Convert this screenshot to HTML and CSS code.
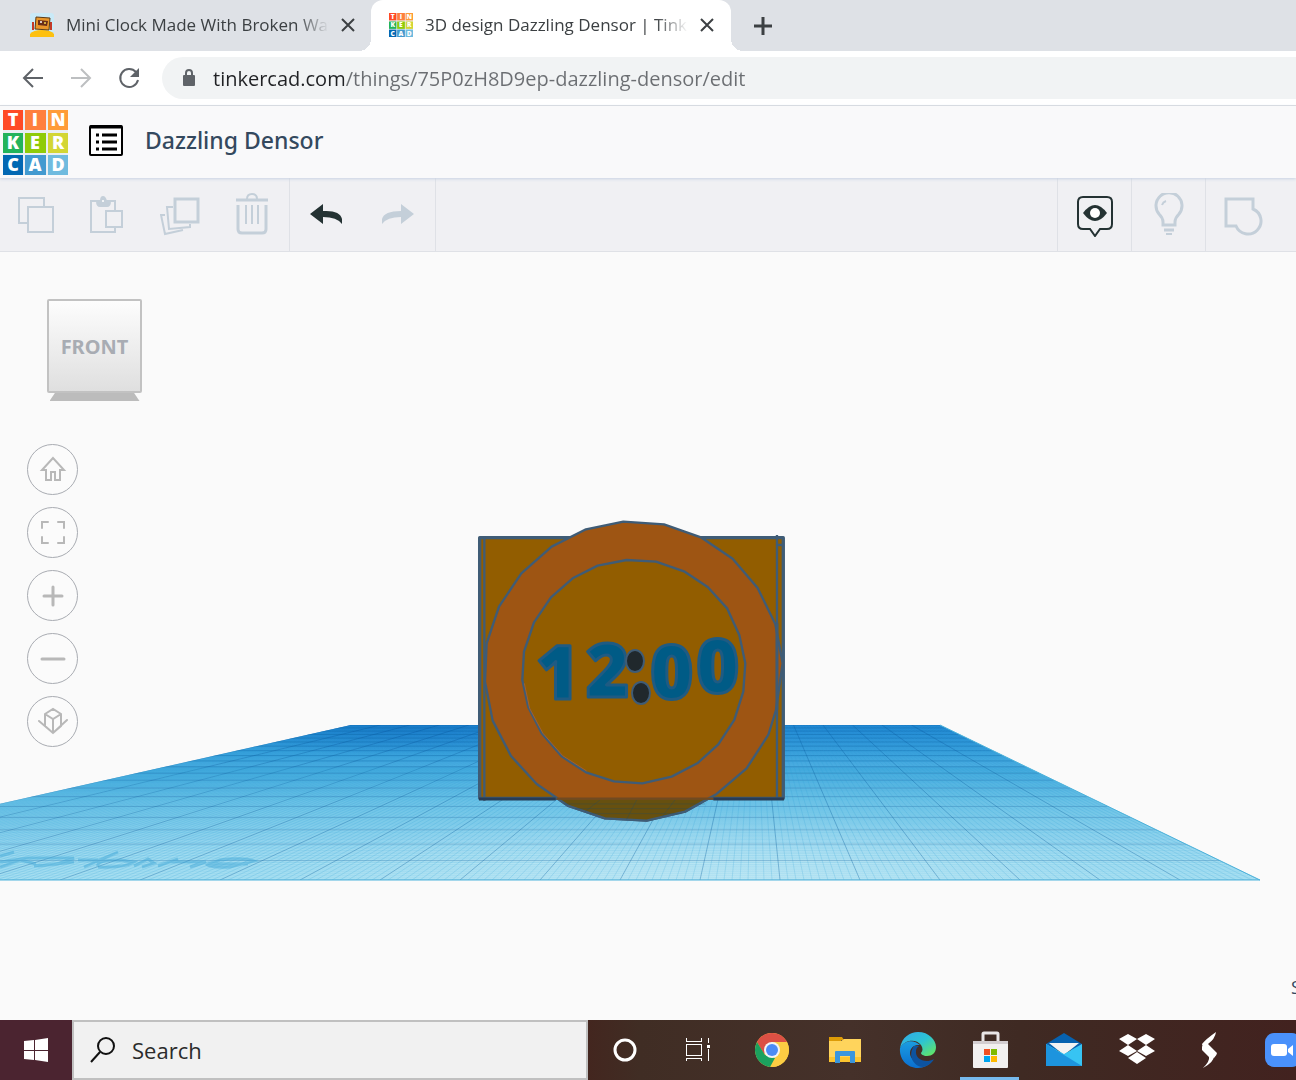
FILE: index.html
```html
<!DOCTYPE html>
<html lang="en">
<head>
    <meta charset="UTF-8">
    <meta name="viewport" content="width=device-width, initial-scale=1.0">
    <title>3D design Dazzling Densor | Tinkercad</title>
    <link rel="stylesheet" href="styles.css">
</head>
<body>

    <svg class="symbols" aria-hidden="true">
        <symbol id="logo" viewBox="0 0 65 65">
            <rect width="65" height="65" fill="#e9eef3"/>
            <g>
                <rect x="0" y="0" width="20" height="20" fill="#ff4a26"/>
                <rect x="22" y="0" width="21" height="20" fill="#ff7f3e"/>
                <rect x="45" y="0" width="20" height="20" fill="#ff9c38"/>
                <rect x="0" y="23" width="20" height="20" fill="#23b35b"/>
                <rect x="22" y="23" width="21" height="20" fill="#8fcb08"/>
                <rect x="45" y="23" width="20" height="20" fill="#d3d634"/>
                <rect x="0" y="45" width="20" height="20" fill="#0268b3"/>
                <rect x="22" y="45" width="21" height="20" fill="#429ad0"/>
                <rect x="45" y="45" width="20" height="20" fill="#6fbbdf"/>
            </g>
            <g fill="#fff" font-family="Open Sans, sans-serif" font-weight="800" font-size="18" text-anchor="middle">
                <text x="10" y="16">T</text><text x="32" y="16">I</text><text x="55" y="16">N</text>
                <text x="10" y="39">K</text><text x="32" y="39">E</text><text x="55" y="39">R</text>
                <text x="10" y="61">C</text><text x="32" y="61">A</text><text x="55" y="61">D</text>
            </g>
        </symbol>
    </svg>

    <!-- Browser -->
    <div class="tab-strip">
        <div class="tab">
            <svg class="favicon" viewBox="0 0 24 24">
                <rect width="24" height="24" rx="3" fill="#c9eaf8"/>
                <path d="M0 24v-3q3-4 12-4t12 4v3z" fill="#fdc010"/>
                <path d="M3 9v8M21 9v8" stroke="#c33a28" stroke-width="2"/>
                <path d="M6 4l14 1-1 12-14-1z" fill="#e9962a" stroke="#593b18"/>
                <path d="M8 7l10 1-1 5-9-1z" fill="#6a2e1a"/>
                <circle cx="11" cy="9" r="1" fill="#fff"/><circle cx="15" cy="10" r="1" fill="#f8d64a"/>
            </svg>
            <span class="tab-title">Mini Clock Made With Broken Watch</span>
            <button class="tab-close" aria-label="Close tab"><svg width="14" height="14" viewBox="0 0 14 14"><path d="M1 1l12 12M13 1L1 13"/></svg></button>
        </div>
        <div class="tab active">
            <svg class="favicon"><use href="#logo"/></svg>
            <span class="tab-title">3D design Dazzling Densor | Tinkercad</span>
            <button class="tab-close" aria-label="Close tab"><svg width="14" height="14" viewBox="0 0 14 14"><path d="M1 1l12 12M13 1L1 13"/></svg></button>
        </div>
        <button class="new-tab" aria-label="New tab"><svg width="18" height="18" viewBox="0 0 18 18"><path d="M9 0v18M0 9h18"/></svg></button>
    </div>

    <div class="browser-bar">
        <button class="nav-button" aria-label="Back"><svg width="24" height="24" viewBox="0 0 24 24"><path d="M22 12H3M12 3l-9 9 9 9" fill="none" stroke="#5f6368" stroke-width="2"/></svg></button>
        <button class="nav-button" aria-label="Forward"><svg width="24" height="24" viewBox="0 0 24 24"><path d="M2 12h19M12 3l9 9-9 9" fill="none" stroke="#bdbfc1" stroke-width="2"/></svg></button>
        <button class="nav-button" aria-label="Reload"><svg width="24" height="24" viewBox="0 0 24 24"><path d="M19 6a9 9 0 1 0 2 8" fill="none" stroke="#5f6368" stroke-width="2"/><path d="M22 2v9h-9z" fill="#5f6368"/></svg></button>
        <div class="omnibox">
            <svg width="14" height="18" viewBox="0 0 14 18"><rect x="1" y="6" width="12" height="11" rx="1" fill="#5f6368"/><path d="M4 7V4a3 3 0 0 1 6 0v3" fill="none" stroke="#5f6368" stroke-width="2"/></svg>
            <input class="url" type="text" aria-label="Address" spellcheck="false" value="tinkercad.com/things/75P0zH8D9ep-dazzling-densor/edit">
        </div>
    </div>

    <!-- Tinkercad -->
    <header class="header">
        <a class="logo" href="#" aria-label="Tinkercad"><svg width="65" height="65"><use href="#logo"/></svg></a>
        <button class="menu-button" aria-label="Designs">
            <svg width="34" height="31" viewBox="0 0 34 31"><rect x="1" y="1" width="32" height="29" rx="1" fill="#fff" stroke="#000" stroke-width="2"/><path d="M1 2h32" stroke="#000" stroke-width="3"/><path d="M7 10h3M7 17h3M7 24h3M13 10h15M13 17h15M13 24h15" stroke="#000" stroke-width="3"/></svg>
        </button>
        <h1 class="design-name">Dazzling Densor</h1>
    </header>

    <div class="toolbar">
        <div class="tool-group">
            <button class="tool" aria-label="Copy"><svg width="40" height="44" viewBox="0 0 40 44"><path d="M11 30H3V5h25v8" /><path d="M12 14h25v25H12z"/></svg></button>
            <button class="tool" aria-label="Paste"><svg width="40" height="44" viewBox="0 0 40 44"><path d="M14 8H3v31h24v-5M21 8h6v9M18 18h16v16H18z"/><path d="M9 8h4q0-4 2-4t3 4h4q0 5-3 5h-7q-3 0-3-5z" fill="#c4cfd9"/><circle cx="15" cy="8" r="1" fill="#fff" stroke="none"/></svg></button>
            <button class="tool" aria-label="Duplicate"><svg width="40" height="44" viewBox="0 0 40 44"><path d="M15 6h23v23H15z" stroke-width="3"/><path d="M13 14H7l2 22 21-2v-3M5 22H1l4 19 18-4"/></svg></button>
            <button class="tool" aria-label="Delete"><svg width="40" height="44" viewBox="0 0 40 44"><path d="M6 12v24q0 4 4 4h20q4 0 4-4V12" stroke-width="3"/><path d="M4 7h32" stroke-width="3"/><path d="M15 6q0-5 5-5t5 5M14 12v19M20 12v19M26 12v19"/></svg></button>
        </div>
        <div class="tool-group">
            <button class="tool dark" aria-label="Undo"><svg width="34" height="24" viewBox="0 0 34 24"><path d="M1 11L14 1v7q17-1 19 8v5q-5-7-19-7v7z" fill="#243233" stroke="none"/></svg></button>
            <button class="tool" aria-label="Redo"><svg width="34" height="24" viewBox="0 0 34 24"><path d="M33 11L20 1v7Q3 8 1 16v5q5-7 19-7v7z" fill="#c4cfd9" stroke="none"/></svg></button>
        </div>
        <div class="tool-group right">
            <button class="tool dark" aria-label="Show notes"><svg width="40" height="44" viewBox="0 0 40 44"><path d="M8 4h24q5 0 5 5v22q0 5-5 5h-7l-5 7-5-7H8q-5 0-5-5V9q0-5 5-5z"/><path d="M8 20q12-16 24 0-12 16-24 0z" fill="#243233" stroke="none"/><circle cx="20" cy="20" r="5" fill="#fff" stroke="none"/></svg></button>
            <button class="tool" aria-label="Show all"><svg width="40" height="44" viewBox="0 0 40 44"><path d="M14 29q0-4-4-8a13 13 0 1 1 20 0q-4 4-4 8v3H14z" stroke-width="3"/><path d="M13 12q1-3 4-4"/><path d="M15 37h10" stroke-width="3"/><path d="M17 41h6"/></svg></button>
            <button class="tool" aria-label="Group"><svg width="40" height="44" viewBox="0 0 40 44"><path d="M3 6h27v10a13 13 0 1 1-17 17H3z" stroke-width="3"/></svg></button>
        </div>
    </div>

    <main class="canvas">
        <svg class="scene" viewBox="0 252 1296 768" preserveAspectRatio="xMidYMid slice">
            <defs>
                <linearGradient id="plane" x1="0" y1="0" x2="0" y2="1">
                    <stop offset="0" stop-color="#1f86d3"/>
                    <stop offset=".2" stop-color="#3ca3dd"/>
                    <stop offset=".5" stop-color="#7ccbeb"/>
                    <stop offset=".8" stop-color="#a5def2"/>
                    <stop offset="1" stop-color="#b0e4f4"/>
                </linearGradient>
                <radialGradient id="glow" gradientUnits="userSpaceOnUse" cx="0" cy="0" r="1" gradientTransform="translate(700 890) scale(420 80)">
                    <stop offset="0" stop-color="#d6f1f8" stop-opacity=".7"/>
                    <stop offset="1" stop-color="#d6f1f8" stop-opacity="0"/>
                </radialGradient>
                <radialGradient id="shade" gradientUnits="userSpaceOnUse" cx="0" cy="0" r="1" gradientTransform="translate(400 725) scale(220 30)">
                    <stop offset="0" stop-color="#0a5cb8" stop-opacity=".5"/>
                    <stop offset="1" stop-color="#0a5cb8" stop-opacity="0"/>
                </radialGradient>
                <clipPath id="planeClip"><path d="M351 725H940L1260 880H-340z"/></clipPath>
                <clipPath id="below"><path d="M0 898h1020v100H0z"/></clipPath>
            </defs>
            <path d="M351 725H940L1260 880H-340z" fill="url(#plane)"/>
            <g clip-path="url(#planeClip)">
                <path d="M-340 725H1260V880H-340z" fill="url(#glow)"/>
                <path d="M-340 725H1260V880H-340z" fill="url(#shade)"/>
                <g id="grid"></g>
                <!-- worn brand mark on the plane -->
                <path d="M0 856l14-4M0 867l20-7 16 4M0 862l28-4h46l-16 6-24 2M38 866l36-4M78 860h20M84 867l34-15M98 866q-2-6 22-6l14 2q-10 6-36 5M134 866l14-7 6 4-12 4M158 866l20-7M170 862h36l-16 5M206 864q4 4 24 3l24-6q-12-4-34-1l-12 4h40" fill="none" stroke="#3ba4d4" stroke-opacity=".45" stroke-width="3"/>
            </g>
            <path d="M-340 880H1260L940 725" fill="none" stroke="#4eb4dc"/>

            <g transform="translate(460 500) scale(.3333)" stroke="#3f5c76" stroke-width="7" stroke-linejoin="round">
                <path d="M59 113h911v782H59z" fill="#925d00" stroke-width="10"/>
                <path d="M73 110v792M951 105v795M951 135h20"/>
                <path fill="#9e5513" d="M490 65L612 73 725 113 818 176 893 264 946 372 968 490 948 630 925 705 860 805 770 882 675 935 560 962 435 955 325 918 230 852 153 768 98 662 75 545 80 430 117 320 184 220 275 140 378 88z"/>
                <path clip-path="url(#below)" fill="#67500f" d="M860 805L770 882 675 935 560 962 435 955 325 918 230 852z"/>
                <path d="M951 370v260" stroke-width="9"/>
                <path fill="none" stroke="#1e4a66" stroke-opacity=".3" stroke-width="3" d="M310 912h425M345 926h350M390 941h275M420 900l-45 35M530 900l-30 58M645 900l-38 50"/>
                <path fill="#925d00" d="M500 180L588 185 672 214 744 262 802 326 838 405 856 490 850 575 823 660 775 733 712 790 635 830 547 850 462 844 378 817 306 770 245 700 205 622 187 540 192 455 222 367 273 292 338 235 413 197z"/>
                <path fill="none" stroke="#a5602a" stroke-width="3" d="M193 550L209 625 249 700 308 767 380 813"/>
                <path stroke="#283c55" stroke-width="9" d="M57 897h230M760 897h212"/>
                <path stroke="#704a22" d="M290 896h470"/>
            </g>
            <g class="clock-text">
                <text x="536" y="699">1</text>
                <text x="586" y="697">2</text>
                <text x="650" y="699">0</text>
                <text x="696" y="693">0</text>
            </g>
            <g fill="#20282c" stroke="#3f5c76" stroke-width="2">
                <ellipse cx="635" cy="661" rx="9" ry="11"/>
                <ellipse cx="641" cy="693" rx="9" ry="11"/>
            </g>
        </svg>

        <button class="view-cube" aria-label="Front view"><span class="cube-face">FRONT</span></button>

        <div class="view-controls">
            <button aria-label="Home view"><svg viewBox="0 0 30 30"><path d="M15 3L4 15h4v10h5v-8h4v8h5V15h4z"/></svg></button>
            <button aria-label="Fit view"><svg viewBox="0 0 30 30"><path d="M4 10V4h6M20 4h6v6M26 19v6h-6M10 25H4v-6"/></svg></button>
            <button aria-label="Zoom in"><svg viewBox="0 0 30 30"><path d="M15 6v18M6 15h18" stroke-width="3"/></svg></button>
            <button aria-label="Zoom out"><svg viewBox="0 0 30 30"><path d="M4 15h22" stroke-width="3"/></svg></button>
            <button aria-label="Perspective"><svg viewBox="0 0 30 30"><path d="M7 7l8-5 8 5v12l-8 7-8-7zM7 7l8 5 8-5M15 12v14M1 14l14 12 14-13"/></svg></button>
        </div>

        <div class="snap-grid">S</div>
    </main>

    <!-- Windows taskbar -->
    <footer class="taskbar">
        <button class="start" aria-label="Start"><svg width="26" height="26" viewBox="0 0 26 26"><path d="M1 4l10-1v10H1zM12 3l13-2v12H12zM1 14h10v9L1 22zM12 14h13v11l-13-2z" fill="#fff"/></svg></button>
        <label class="search">
            <svg width="26" height="26" viewBox="0 0 26 26"><circle cx="16" cy="9" r="8" fill="none" stroke="#111" stroke-width="2"/><path d="M10 15L1 25" stroke="#111" stroke-width="2"/></svg>
            <input type="text" placeholder="Search" aria-label="Search">
        </label>
        <div class="apps">
            <button aria-label="Cortana"><svg viewBox="0 0 36 36"><circle cx="18" cy="18" r="10" fill="none" stroke="#fff" stroke-width="3"/></svg></button>
            <button aria-label="Task view"><svg viewBox="0 0 36 36" shape-rendering="crispEdges"><path d="M6 6v3h15V6M6 29v-3h15v3M6 12h15v11H6zM28 6v5M28 17v12" fill="none" stroke="#fff"/><path d="M27 13h3v3h-3z" fill="#fff"/></svg></button>
            <button aria-label="Chrome"><svg viewBox="0 0 36 36"><circle cx="19" cy="18" r="17" fill="#fccd43"/><path d="M4 10a17 17 0 0 1 30 0H19l-8 12z" fill="#dc5044"/><path d="M4 10l8 13 10 3-5 9A17 17 0 0 1 4 10z" fill="#1ba15e"/><path d="M19 10h15a17 17 0 0 1-15 25l7-12z" fill="#fccd43"/><circle cx="19" cy="18" r="8" fill="#f4f4f4"/><circle cx="19" cy="18" r="6" fill="#4c8bf5"/></svg></button>
            <button aria-label="File Explorer"><svg viewBox="0 0 36 36"><path d="M3 5h13l2 3h-3v6H3z" fill="#dd9c07"/><path d="M3 9h12l3-2h17v23H3z" fill="#ffd45c"/><path d="M3 25h32v5H3z" fill="#fdc52f"/><path d="M9 31V20q0-1 1-1h18q1 0 1 1v11h-5v-7H14v7z" fill="#3a96dd"/></svg></button>
            <button aria-label="Edge"><svg viewBox="0 0 36 36">
                <defs>
                    <linearGradient id="edgeTop" x1="0" y1="0" x2="1" y2="1"><stop offset="0" stop-color="#33a9e8"/><stop offset=".5" stop-color="#2cc3d4"/><stop offset="1" stop-color="#6bea55"/></linearGradient>
                    <linearGradient id="edgeLow" x1="0" y1="0" x2="0" y2="1"><stop offset="0" stop-color="#1b9de0"/><stop offset="1" stop-color="#0b6fd0"/></linearGradient>
                </defs>
                <path d="M1 16C3 5 11 0 19 0c11 0 18 8 18 15 0 6-4 9-9 9-4 0-6-2-6-3 2-2 2-5 0-8C17 6 5 8 1 16z" fill="url(#edgeTop)"/>
                <path d="M1 16C5 8 15 7 21 13c-8-1-12 6-9 12s10 8 21 4c-3 4-8 7-14 7C8 36 0 27 1 16z" fill="url(#edgeLow)"/>
                <path d="M15 14c-6 8-2 20 9 21 5-1 9-4 11-8-9 5-19 0-18-8 0-2 1-4 3-5z" fill="#0d53a0"/>
            </svg></button>
            <button class="running" aria-label="Microsoft Store"><svg viewBox="0 0 36 36"><path d="M11 10V2q0-1 1-1h13q1 0 1 1v8" fill="none" stroke="#e9e5e6" stroke-width="3"/><path d="M1 9h35v26q0 1-1 1H2q-1 0-1-1z" fill="#f2f0f0"/><path d="M1 9h35v3H1z" fill="#d3cdd0"/><path d="M12 17h6v6h-6z" fill="#f25022"/><path d="M19 17h6v6h-6z" fill="#7fba00"/><path d="M12 24h6v6h-6z" fill="#00a4ef"/><path d="M19 24h6v6h-6z" fill="#ffb900"/></svg></button>
            <button aria-label="Mail"><svg viewBox="0 0 36 36"><path d="M1 12L19 1l18 11v6H1z" fill="#0762b0"/><path d="M4 11h30L19 23z" fill="#f3f3f3"/><path d="M1 12l18 10 18-10v22H1z" fill="#37c4f3"/><path d="M1 12l36 22H1z" fill="#1d94de"/></svg></button>
            <button aria-label="Dropbox"><svg viewBox="0 0 36 36" fill="#fff"><path d="M10 2l9 5-9 6-9-6zM28 2l9 5-9 6-9-6zM10 13l9 6-9 5-9-5zM28 13l9 6-9 5-9-5zM19 20l9 6-9 6-9-6z"/></svg></button>
            <button aria-label="S app"><svg viewBox="0 0 36 36" fill="#fff"><path d="M25 0q-10 7-14 12l1 4 11 10q3-3 3-5l-9-9q7-5 8-12zM11 14v4l7 7q1 4-6 11 11-6 11-12z"/></svg></button>
            <button aria-label="Zoom"><svg viewBox="0 0 36 36"><rect x="1" y="1" width="36" height="34" rx="9" fill="#4a91fb"/><rect x="7" y="12" width="16" height="12" rx="3" fill="#fff"/><path d="M24 17l5-4v11l-5-4z" fill="#fff"/></svg></button>
        </div>
    </footer>

    <script src="script.js"></script>
</body>
</html>
```

FILE: styles.css
```css
* {
    box-sizing: border-box;
}

body {
    margin: 0;
    height: 100vh;
    display: flex;
    flex-direction: column;
    overflow: hidden;
    background-color: #fafafa;
    font-family: "Open Sans", "Noto Sans", sans-serif;
    color: #3c4043;
}

button {
    display: flex;
    align-items: center;
    justify-content: center;
    flex: none;
    padding: 0;
    border: none;
    background: none;
    font-family: inherit;
    cursor: pointer;
}

svg {
    display: block;
    flex: none;
}

input {
    min-width: 0;
    flex: 1;
    padding: 0;
    border: none;
    outline: none;
    background: none;
    font-family: inherit;
}

.symbols {
    display: none;
}

/* Browser */
.tab-strip {
    display: flex;
    flex: none;
    height: 51px;
    background-color: #dee1e6;
}

.tab {
    display: flex;
    align-items: center;
    gap: 12px;
    width: 371px;
    padding: 0 16px 2px 30px;
}

.tab.active {
    position: relative;
    width: 360px;
    padding-left: 18px;
    padding-right: 17px;
    background-color: #fff;
    border-radius: 12px 12px 0 0;
}

/* curved feet of the active tab */
.tab.active::before,
.tab.active::after {
    content: "";
    position: absolute;
    bottom: 0;
    width: 12px;
    height: 12px;
}

.tab.active::before {
    left: -12px;
    background: radial-gradient(circle at 0 0, #dee1e6 12px, #fff 12px);
}

.tab.active::after {
    right: -12px;
    background: radial-gradient(circle at 100% 0, #dee1e6 12px, #fff 12px);
}

.favicon {
    width: 24px;
    height: 24px;
}

.tab-title {
    flex: 1;
    min-width: 0;
    overflow: hidden;
    white-space: nowrap;
    font-size: 17px;
    -webkit-mask-image: linear-gradient(to left, transparent, #000 32px);
    mask-image: linear-gradient(to left, transparent, #000 32px);
}

.tab-close path,
.new-tab path {
    stroke: #3c4043;
    stroke-width: 3;
}

.tab-close path {
    stroke-width: 2;
}

.new-tab {
    width: 64px;
}

.browser-bar {
    display: flex;
    flex: none;
    align-items: center;
    height: 55px;
    padding-left: 9px;
    background-color: #fff;
    border-bottom: 1px solid #dadce0;
}

.nav-button {
    width: 48px;
    height: 48px;
}

.omnibox {
    display: flex;
    flex: 1;
    align-items: center;
    gap: 17px;
    height: 42px;
    margin-left: 9px;
    padding-left: 20px;
    background-color: #f1f3f4;
    border-radius: 21px 0 0 21px;
}

/* host name darker than the path */
.url {
    height: 42px;
    font-size: 20px;
    background: linear-gradient(to right, #202124 131px, #6b6e72 131px);
    -webkit-background-clip: text;
    background-clip: text;
    -webkit-text-fill-color: transparent;
}

/* Tinkercad */
.header {
    position: relative;
    z-index: 1;
    display: flex;
    flex: none;
    align-items: center;
    height: 72px;
    padding-left: 3px;
    background-color: #f9f9fa;
    box-shadow: 0 1px 3px #c8d3e3;
}

.menu-button {
    margin: 0 22px 4px 21px;
}

.design-name {
    margin: 0 0 4px;
    font-family: "Noto Sans", sans-serif;
    font-size: 23px;
    font-weight: 500;
    color: #34495e;
}

.toolbar {
    display: flex;
    flex: none;
    height: 74px;
    background-color: #f0f0f3;
    border-bottom: 1px solid #dfe1e6;
}

.tool-group {
    display: flex;
    padding-right: 1px;
    border-right: 1px solid #dfe1e6;
}

.tool {
    width: 72px;
}

.tool svg {
    fill: none;
    stroke: #c4cfd9;
    stroke-width: 2;
}

.tool.dark svg {
    stroke: #243233;
}

.tool-group.right {
    margin-left: auto;
    padding-right: 17px;
    border-right: none;
}

.right .tool {
    width: 74px;
    border-left: 1px solid #dfe1e6;
}

.canvas {
    position: relative;
    flex: 1;
    min-height: 0;
    overflow: hidden;
    padding: 47px 27px;
}

.scene {
    position: absolute;
    top: 0;
    left: 0;
    width: 100%;
    height: 100%;
}

.clock-text {
    font-family: "Open Sans", sans-serif;
    font-size: 74px;
    font-weight: 800;
    fill: #005b86;
    stroke: #1f5b83;
    stroke-width: 3;
    stroke-linejoin: round;
}

.view-cube {
    position: relative;
    flex-direction: column;
    margin-left: 20px;
}

.view-cube::after {
    content: "";
    width: 90px;
    height: 8px;
    background-color: #bcbcbc;
    clip-path: polygon(6% 0, 94% 0, 100% 100%, 0 100%);
}

.cube-face {
    width: 95px;
    height: 94px;
    border: 2px solid #c2c2c2;
    border-radius: 2px;
    background: linear-gradient(#fdfdfd, #dfdfdf);
    font-family: "Noto Sans", sans-serif;
    font-size: 20px;
    font-weight: 700;
    line-height: 92px;
    color: #a8acb3;
}

.view-controls {
    position: relative;
    display: flex;
    flex-direction: column;
    gap: 12px;
    width: 51px;
    margin-top: 43px;
}

.view-controls button {
    height: 51px;
    border: 1px solid #a9acb2;
    border-radius: 50%;
    background-color: #fbfbfb;
}

.view-controls svg {
    width: 30px;
    height: 30px;
    fill: none;
    stroke: #b8b8b8;
    stroke-width: 2;
    stroke-linecap: round;
}

.snap-grid {
    position: absolute;
    right: 0;
    bottom: 21px;
    width: 5px;
    overflow: hidden;
    font-size: 18px;
    color: #34495e;
}

/* Windows taskbar */
.taskbar {
    display: flex;
    flex: none;
    height: 60px;
    overflow: hidden;
    background: linear-gradient(to right, #43261f 588px, #402d24 640px, #45312a 850px, #3f2a23 1020px, #42221f);
}

.start {
    width: 72px;
    background-color: #4b2430;
}

.search {
    display: flex;
    flex: 1 1 516px;
    max-width: 516px;
    align-items: center;
    gap: 16px;
    padding-left: 16px;
    border: 2px solid #c0c0c0;
    background-color: #f1f1f1;
}

.search input {
    font-size: 22px;
}

.search input::placeholder {
    color: #2b2b2b;
    opacity: 1;
}

.apps {
    display: flex;
    flex: 1 1 0;
    min-width: 0;
}

.apps button {
    width: 73px;
}

.apps svg {
    width: 36px;
    height: 36px;
    overflow: visible;
}

.apps .running {
    background: linear-gradient(#76b9ed, #76b9ed) center bottom / 59px 3px no-repeat;
}
```

FILE: script.js
```js
// Draws the workplane grid in one-point perspective
var grid = document.getElementById("grid");
var cells = 20;
var steps = 10;
var near = { left: -340, y: 880, size: 80 };
var far = { left: 351, y: 725, size: 29.5 };

function addLine(x1, y1, x2, y2, isMajor) {
    var line = document.createElementNS("http://www.w3.org/2000/svg", "line");
    line.setAttribute("x1", x1);
    line.setAttribute("y1", y1);
    line.setAttribute("x2", x2);
    line.setAttribute("y2", y2);
    line.setAttribute("stroke", isMajor ? "#0c62a0" : "#2f9fd6");
    line.setAttribute("stroke-opacity", isMajor ? 0.36 : 0.2);
    grid.appendChild(line);
}

for (var i = 0; i <= cells * steps; i++) {
    var n = i / steps;
    var isMajor = i % steps === 0;

    addLine(near.left + n * near.size, near.y, far.left + n * far.size, far.y, isMajor);

    // rows get closer together towards the far edge
    var size = 1 / (1 / near.size + (n / cells) * (1 / far.size - 1 / near.size));
    var y = far.y + (size - far.size) * (near.y - far.y) / (near.size - far.size);
    if (isMajor || i < 100) {
        addLine(near.left, y, 1260, y, isMajor);
    }
}
```
